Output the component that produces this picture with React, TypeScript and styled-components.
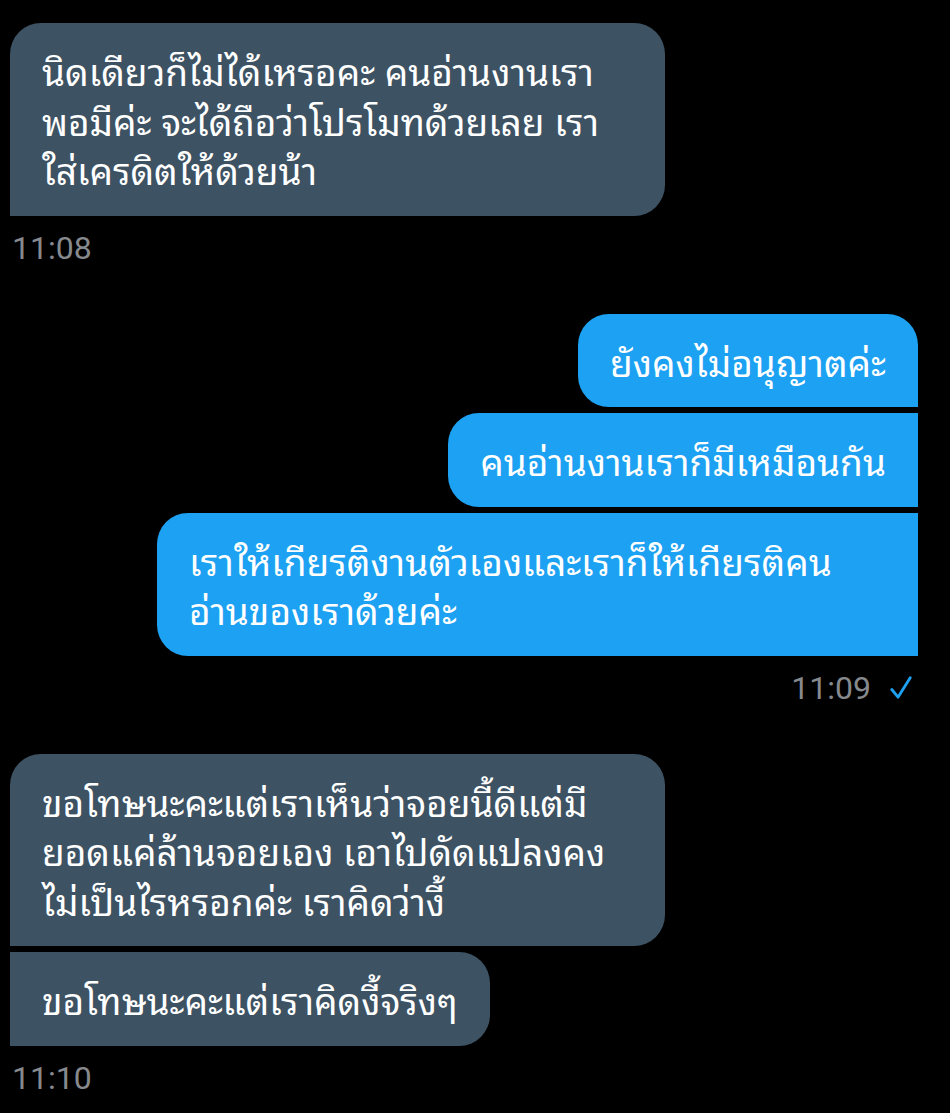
import React from "react";
import styled, { createGlobalStyle } from "styled-components";

const GlobalStyle = createGlobalStyle`
  html, body {
    margin: 0;
    padding: 0;
    background: #000;
  }
  body {
    font-family: "Noto Sans Thai Looped", "Noto Sans Thai UI", "Noto Sans Thai", "Noto Sans", Roboto, sans-serif;
  }
`;

type Side = "in" | "out";
type Position = "single" | "first" | "middle" | "last";

interface IMessage {
  lines: string[];
  width?: number;
}

interface IGroup {
  side: Side;
  time: string;
  seen?: boolean;
  messages: IMessage[];
}

const Screen = styled.div`
  width: 950px;
  min-height: 1113px;
  box-sizing: border-box;
  padding: 23px 32px 0 10px;
  display: flex;
  flex-direction: column;
  gap: 48px;
`;

const Group = styled.div<{ side: Side }>`
  display: flex;
  flex-direction: column;
  align-items: ${({ side }) => (side === "out" ? "flex-end" : "flex-start")};
  gap: 6px;
`;

const radius = (side: Side, position: Position) => {
  const r = "31px";
  const flat = "0";
  if (side === "in") {
    const topLeft = position === "single" || position === "first" ? r : flat;
    return `${topLeft} ${r} ${r} ${flat}`;
  }
  const topRight = position === "single" || position === "first" ? r : flat;
  return `${r} ${topRight} ${flat} ${r}`;
};

const Bubble = styled.div<{ side: Side; position: Position; fixedWidth?: number }>`
  box-sizing: border-box;
  width: ${({ fixedWidth }) => (fixedWidth ? `${fixedWidth}px` : "auto")};
  padding: 22px 32px;
  border-radius: ${({ side, position }) => radius(side, position)};
  background-color: ${({ side }) => (side === "out" ? "#1da1f2" : "#3d5263")};
  color: #ffffff;
  font-size: 37px;
  line-height: 49.5px;
`;

const Line = styled.span`
  display: block;
  white-space: nowrap;
`;

const Meta = styled.div<{ side: Side }>`
  display: flex;
  align-items: center;
  gap: 19px;
  margin-top: 8px;
  padding: ${({ side }) => (side === "out" ? "0 6px 0 0" : "0 0 0 2px")};
  font-family: Roboto, "Liberation Sans", sans-serif;
  font-size: 32px;
  line-height: 36px;
  color: #86898d;
`;

const CheckIcon = () => (
  <svg width="22" height="24" viewBox="0 0 22 24" fill="none">
    <path
      d="M1.8 13.5 L8 21.2 L20.2 1.8"
      stroke="#1da1f2"
      strokeWidth="2.8"
      strokeLinecap="round"
      strokeLinejoin="round"
    />
  </svg>
);

const groups: IGroup[] = [
  {
    side: "in",
    time: "11:08",
    messages: [
      {
        width: 655,
        lines: [
          "นิดเดียวก็ไม่ได้เหรอคะ คนอ่านงานเรา",
          "พอมีค่ะ จะได้ถือว่าโปรโมทด้วยเลย เรา",
          "ใส่เครดิตให้ด้วยน้า",
        ],
      },
    ],
  },
  {
    side: "out",
    time: "11:09",
    seen: true,
    messages: [
      { lines: ["ยังคงไม่อนุญาตค่ะ"] },
      { lines: ["คนอ่านงานเราก็มีเหมือนกัน"] },
      {
        width: 761,
        lines: ["เราให้เกียรติงานตัวเองและเราก็ให้เกียรติคน", "อ่านของเราด้วยค่ะ"],
      },
    ],
  },
  {
    side: "in",
    time: "11:10",
    messages: [
      {
        width: 655,
        lines: [
          "ขอโทษนะคะแต่เราเห็นว่าจอยนี้ดีแต่มี",
          "ยอดแค่ล้านจอยเอง เอาไปดัดแปลงคง",
          "ไม่เป็นไรหรอกค่ะ เราคิดว่างี้",
        ],
      },
      { lines: ["ขอโทษนะคะแต่เราคิดงี้จริงๆ"] },
    ],
  },
];

const positionOf = (index: number, count: number): Position => {
  if (count === 1) return "single";
  if (index === 0) return "first";
  if (index === count - 1) return "last";
  return "middle";
};

const App = () => (
  <>
    <GlobalStyle />
    <Screen>
      {groups.map((group, gi) => (
        <Group key={gi} side={group.side}>
          {group.messages.map((message, mi) => (
            <Bubble
              key={mi}
              side={group.side}
              position={positionOf(mi, group.messages.length)}
              fixedWidth={message.width}
            >
              {message.lines.map((line, li) => (
                <Line key={li}>{line}</Line>
              ))}
            </Bubble>
          ))}
          <Meta side={group.side}>
            <span>{group.time}</span>
            {group.seen && <CheckIcon />}
          </Meta>
        </Group>
      ))}
    </Screen>
  </>
);

export default App;
